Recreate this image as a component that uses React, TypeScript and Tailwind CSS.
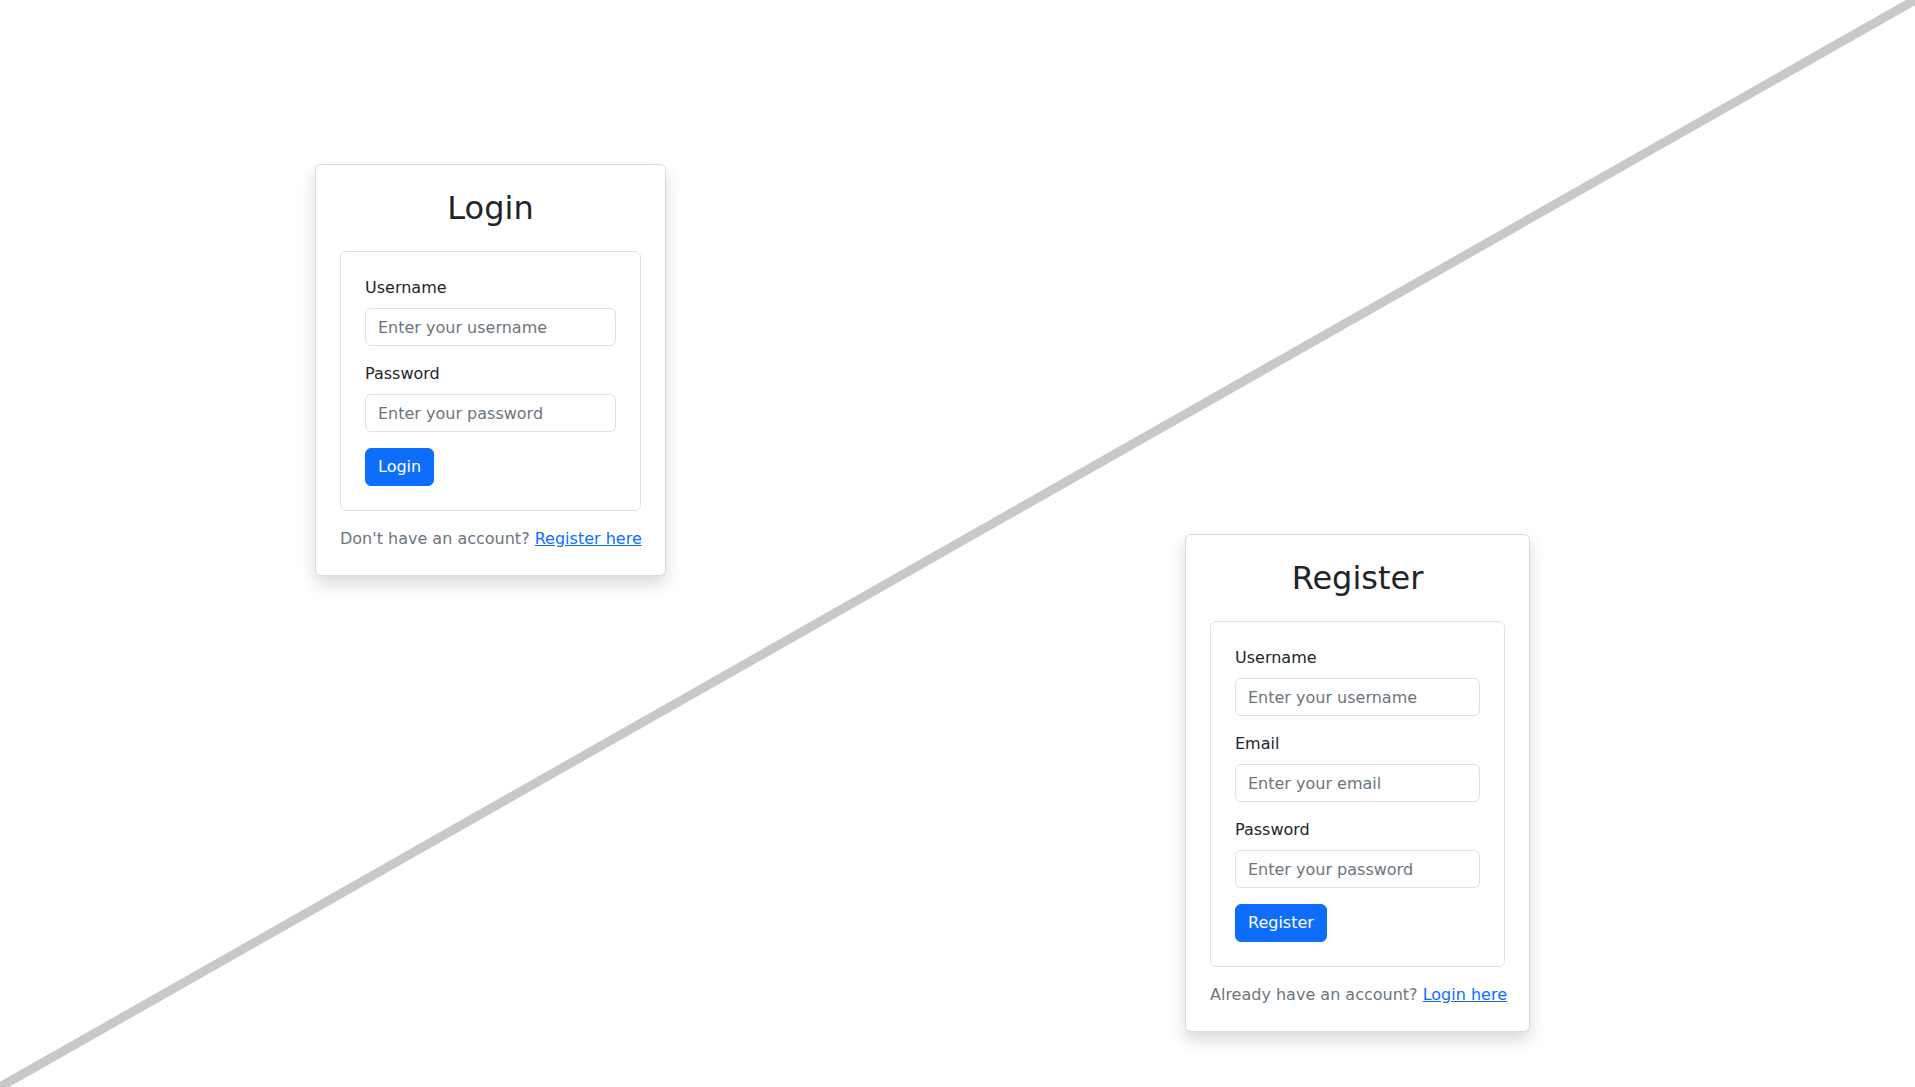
import * as React from "react";

const font = { fontFamily: '"DejaVu Sans", "Liberation Sans", sans-serif' };

const Field = ({ label, placeholder, type = "text" }: { label: string; placeholder: string; type?: string }) => (
  <div className="mb-4">
    <label className="mb-2 block text-base leading-6 text-[#212529]">{label}</label>
    <input
      type={type}
      placeholder={placeholder}
      className="block h-[38px] w-full rounded-[6px] border border-[#dee2e6] bg-white px-3 text-base leading-6 text-[#212529] outline-none placeholder:text-[#6c757d]"
    />
  </div>
);

const AuthCard = ({
  title,
  fields,
  button,
  prompt,
  link,
  width,
}: {
  title: string;
  fields: { label: string; placeholder: string; type?: string }[];
  button: string;
  prompt: string;
  link: string;
  width: string;
}) => (
  <div className={`${width} shrink-0 rounded-[6px] border border-[#d9dadc] bg-white p-6 shadow-[0_0.5rem_1rem_rgba(0,0,0,0.15)]`}>
    <h2 className="mb-6 text-center text-[32px] leading-[38.4px] font-medium text-[#212529]">{title}</h2>
    <div className="rounded-[6px] border border-[#dee2e6] p-6">
      {fields.map((f) => (
        <Field key={f.label} {...f} />
      ))}
      <button className="h-[38px] rounded-[6px] border border-[#0d6efd] bg-[#0d6efd] px-3 text-base leading-6 text-white">
        {button}
      </button>
    </div>
    <p className="mt-4 whitespace-nowrap text-center text-base leading-6 text-[#6c757d]">
      {prompt}{" "}
      <a href="#" className="text-[#0d6efd] underline">
        {link}
      </a>
    </p>
  </div>
);

export default function App() {
  return (
    <div className="relative h-[1087px] w-full overflow-hidden bg-white" style={font}>
      <svg className="pointer-events-none absolute inset-0" width="1915" height="1087" viewBox="0 0 1915 1087">
        <line x1="0" y1="1087" x2="1915" y2="0" stroke="#c8c8c8" strokeWidth="9" />
      </svg>
      <div className="relative flex items-start">
        <div className="ml-[315px] mt-[164px]">
          <AuthCard
            title="Login"
            width="w-[351px]"
            fields={[
              { label: "Username", placeholder: "Enter your username" },
              { label: "Password", placeholder: "Enter your password", type: "password" },
            ]}
            button="Login"
            prompt="Don't have an account?"
            link="Register here"
          />
        </div>
        <div className="ml-[519px] mt-[534px]">
          <AuthCard
            title="Register"
            width="w-[345px]"
            fields={[
              { label: "Username", placeholder: "Enter your username" },
              { label: "Email", placeholder: "Enter your email", type: "email" },
              { label: "Password", placeholder: "Enter your password", type: "password" },
            ]}
            button="Register"
            prompt="Already have an account?"
            link="Login here"
          />
        </div>
      </div>
    </div>
  );
}
